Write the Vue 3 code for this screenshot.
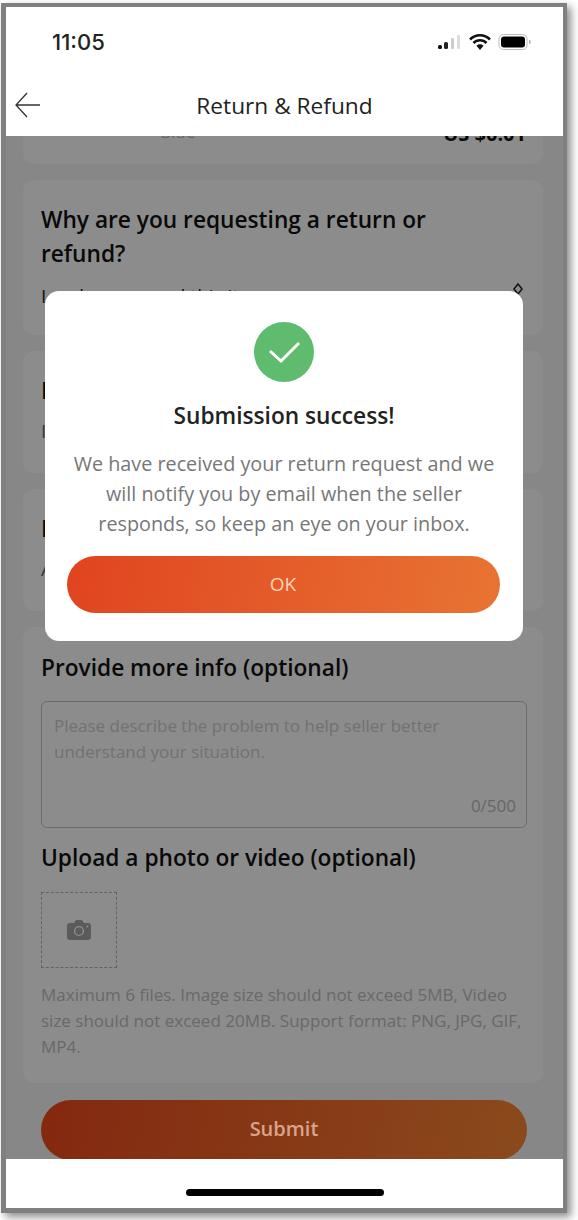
<script setup>
const helpText = 'Maximum 6 files. Image size should not exceed 5MB, Video size should not exceed 20MB. Support format: PNG, JPG, GIF, MP4.'
</script>

<template>
  <div class="shot">
    <div class="phone">
      <header class="top">
        <div class="status">
          <span class="time">11:05</span>
          <div class="status-icons">
            <svg width="25" height="16" viewBox="0 0 25 16">
              <rect x="1" y="11" width="4" height="4" rx="1.5" fill="#111" />
              <rect x="7" y="8" width="4" height="7" rx="1.5" fill="#222" />
              <rect x="14" y="4" width="3" height="11" rx="1" fill="#ccc" />
              <rect x="20" y="1" width="3" height="14" rx="1" fill="#ddd" />
            </svg>
            <svg width="24" height="18" viewBox="0 0 24 18">
              <path d="M2 6.5a14 14 0 0 1 20 0M5.5 10a9 9 0 0 1 13 0" fill="none" stroke="#111" stroke-width="2.6" />
              <path d="M8.5 12.8a5 5 0 0 1 7 0L12 17z" fill="#111" />
            </svg>
            <svg width="34" height="18" viewBox="0 0 34 18">
              <rect x="1" y="1.5" width="28" height="15" rx="4.5" fill="none" stroke="#bbb" />
              <rect x="3" y="3.5" width="24" height="11" rx="3" fill="#000" />
              <rect x="31" y="7" width="1.5" height="4" rx="0.7" fill="#aaa" />
            </svg>
          </div>
        </div>
        <div class="nav">
          <svg class="back" width="28" height="28" viewBox="0 0 28 28">
            <path d="M26 14H2M13 2 2 14l11 12" fill="none" stroke="#333" stroke-width="1.3" />
          </svg>
          <span class="nav-title">Return &amp; Refund</span>
        </div>
      </header>

      <main class="scroll">
        <div class="scroll-inner">
          <section class="card product">
            <span class="variant">Blue</span>
            <strong class="price">US $0.01</strong>
          </section>

          <section class="card reason">
            <h2>Why are you requesting a return or refund?</h2>
            <div class="row">
              <span>I no longer need this item</span>
              <svg width="12" height="18" viewBox="0 0 12 18"><path d="M6 2 10 7 6 12 2 7z" fill="none" stroke="#222" stroke-width="1.5" /></svg>
            </div>
          </section>

          <section class="card small">
            <h2>Item condition</h2>
            <p class="value">Item received</p>
          </section>

          <section class="card small">
            <h2>Refund amount</h2>
            <p class="value">Amount</p>
          </section>

          <section class="card more">
            <h2>Provide more info (optional)</h2>
            <div class="textarea">
              <p>Please describe the problem to help seller better understand your situation.</p>
              <span class="count">0/500</span>
            </div>
            <h2 class="upload-title">Upload a photo or video (optional)</h2>
            <div class="upload">
              <svg width="26" height="22" viewBox="0 0 26 22">
                <path d="M4 4h4l2-3h6l2 3h4a3 3 0 0 1 3 3v11a3 3 0 0 1-3 3H4a3 3 0 0 1-3-3V7a3 3 0 0 1 3-3z" fill="#a6a6a6" />
                <circle cx="13" cy="12" r="4.4" fill="none" stroke="#fff" stroke-width="1.4" />
                <circle cx="21.5" cy="7.5" r="1" fill="#fff" />
              </svg>
            </div>
            <p class="help">{{ helpText }}</p>
          </section>

          <button class="submit">Submit</button>
        </div>

        <div class="dim"></div>
      </main>

      <footer class="home"><span></span></footer>

      <div class="modal">
        <div class="check">
          <svg width="36" height="30" viewBox="0 0 36 30">
            <path d="M4 14 15 24 33 6" fill="none" stroke="#fff" stroke-width="3" />
          </svg>
        </div>
        <h3>Submission success!</h3>
        <p>We have received your return request and we will notify you by email when the seller responds, so keep an eye on your inbox.</p>
        <button class="ok">OK</button>
      </div>
    </div>
  </div>
</template>

<style>
html,
body {
  background: #fff;
}
</style>

<style scoped>
.shot {
  width: 578px;
  height: 1220px;
  padding: 3px 11px 7px 1px;
  box-sizing: border-box;
  font-family: 'Open Sans', sans-serif;
  overflow: hidden;
}

.phone {
  position: relative;
  height: 100%;
  display: flex;
  flex-direction: column;
  border: solid #808080;
  border-width: 4px 4px 5px 5px;
  box-shadow: 4px 4px 8px rgba(0, 0, 0, 0.45);
  background: #f6f6f6;
  box-sizing: border-box;
}

.top {
  height: 129px;
  flex: none;
  background: #fff;
  position: relative;
  z-index: 2;
}

.status {
  height: 68px;
  display: flex;
  justify-content: space-between;
  align-items: center;
  padding: 2px 31px 0 46px;
  box-sizing: border-box;
}

.time {
  font-family: Inter, sans-serif;
  font-size: 22px;
  font-weight: 500;
  color: #222;
}

.status-icons {
  display: flex;
  align-items: center;
  gap: 6px;
}

.nav {
  position: relative;
  height: 60px;
  display: flex;
  align-items: center;
  justify-content: center;
}

.back {
  position: absolute;
  left: 8px;
  top: 16px;
}

.nav-title {
  font-size: 22.7px;
  color: #222;
}

.scroll {
  position: relative;
  flex: 1;
  overflow: hidden;
}

.scroll-inner {
  margin-top: -59px;
  padding: 0 20px 0 17px;
  display: flex;
  flex-direction: column;
  gap: 16px;
}

.card {
  background: #fff;
  border-radius: 12px;
  box-sizing: border-box;
  padding: 0 16px 0 18px;
}

.product {
  height: 87px;
  display: flex;
  justify-content: space-between;
  padding: 43px 17px 0 137px;
}

.variant {
  font-size: 17px;
  color: #bbb;
}

.price {
  font-size: 20px;
  color: #111;
}

h2 {
  margin: 0;
  font-size: 22.7px;
  line-height: 34px;
  font-weight: 600;
  color: #111;
}

.reason {
  height: 155px;
  padding-top: 23px;
}

.reason h2 {
  max-width: 440px;
}

.row {
  display: flex;
  justify-content: space-between;
  margin-top: 9px;
  font-size: 19px;
  line-height: 32px;
  color: #222;
}

.row svg {
  margin: 2px 3px 0 0;
}

.small {
  height: 122px;
  padding-top: 23px;
}

.value {
  margin: 10px 0 0;
  font-size: 19px;
  color: #666;
}

.more {
  height: 456px;
  padding-top: 24px;
}

.textarea {
  position: relative;
  height: 127px;
  margin-top: 16px;
  padding: 11px 12px;
  box-sizing: border-box;
  border: 1px solid #c4c4c4;
  border-radius: 6px;
  font-size: 17px;
  line-height: 26px;
  color: #cfcfcf;
}

.textarea p {
  margin: 0;
}

.count {
  position: absolute;
  right: 10px;
  bottom: 8px;
  color: #bbb;
}

.upload-title {
  margin-top: 13px;
}

.upload {
  width: 76px;
  height: 76px;
  margin-top: 17px;
  box-sizing: border-box;
  border: 1px dashed #b4b4b4;
  display: flex;
  align-items: center;
  justify-content: center;
}

.help {
  margin: 14px 0 0;
  font-size: 17px;
  line-height: 26px;
  color: #c0c0c0;
}

.submit {
  position: relative;
  z-index: 1;
  height: 60px;
  margin: 1px 16px 0 18px;
  padding-bottom: 4px;
  flex: none;
  border: 0;
  border-radius: 30px;
  background: linear-gradient(100deg, #842810, #8a4a1c);
  color: #d8a48c;
  font: 600 20px 'Open Sans', sans-serif;
}

.dim {
  position: absolute;
  inset: 0;
  background: rgba(0, 0, 0, 0.45);
}

.home {
  height: 49px;
  flex: none;
  background: #fff;
  position: relative;
  z-index: 2;
  display: flex;
  justify-content: center;
  padding-top: 30px;
  box-sizing: border-box;
}

.home span {
  width: 198px;
  height: 7px;
  background: #000;
  border-radius: 4px;
}

.modal {
  position: absolute;
  z-index: 3;
  left: 39px;
  top: 284px;
  width: 478px;
  height: 350px;
  box-sizing: border-box;
  background: #fff;
  border-radius: 14px;
  padding: 31px 22px 0;
  display: flex;
  flex-direction: column;
  align-items: center;
  text-align: center;
}

.check {
  width: 60px;
  height: 60px;
  border-radius: 50%;
  background: #5fbb6d;
  display: flex;
  align-items: center;
  justify-content: center;
}

.modal h3 {
  margin: 17px 0 0;
  font-size: 22.7px;
  line-height: 34px;
  font-weight: 600;
  color: #222;
}

.modal p {
  margin: 16px 0 0;
  font-size: 19.8px;
  line-height: 30px;
  color: #777;
}

.ok {
  width: 433px;
  height: 57px;
  margin: 17px 2px 0 0;
  padding-bottom: 2px;
  flex: none;
  border: 0;
  border-radius: 29px;
  background: linear-gradient(100deg, #e04420, #e87433);
  color: #fbd5b8;
  font: 19px 'Open Sans', sans-serif;
}
</style>
